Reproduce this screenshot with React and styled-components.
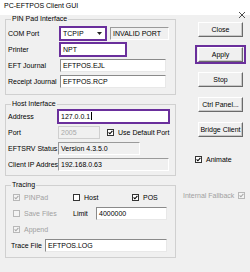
import React from 'react';
import styled, { createGlobalStyle } from 'styled-components';

const GlobalStyle = createGlobalStyle`
  html, body {
    margin: 0;
    padding: 0;
    background: #f0f0f0;
  }
  body {
    font-family: "Liberation Sans", Arial, sans-serif;
    font-size: 7px;
    color: #000;
  }
`;

const PURPLE = '#6a2f9c';

const Window = styled.div`
  width: 250px;
  height: 272px;
  background: #f0f0f0;
  overflow: hidden;
  display: flex;
  flex-direction: column;
`;

const TitleBar = styled.div`
  height: 15px;
  flex: none;
  background: #fff;
  display: flex;
  justify-content: space-between;
  align-items: flex-start;
  padding: 0 5px 0 4px;
  box-sizing: border-box;
`;

const Title = styled.span`
  font-size: 7px;
  line-height: 12px;
`;

const CloseX = styled.svg`
  margin-top: 12px;
  width: 6px;
  height: 6px;
`;

const Body = styled.div`
  display: flex;
  flex: 1;
`;

const LeftCol = styled.div`
  width: 176px;
  flex: none;
  padding-left: 5px;
  box-sizing: border-box;
  display: flex;
  flex-direction: column;
  gap: 5px;
`;

const RightCol = styled.div`
  flex: 1;
  display: flex;
  flex-direction: column;
  padding-top: 7px;
`;

const Group = styled.fieldset`
  margin: 0;
  width: 171px;
  min-width: 0;
  box-sizing: border-box;
  border: 1px solid #d0d0d0;
  padding: ${p => p.$pad};
`;

const Legend = styled.legend`
  font-size: 7px;
  line-height: 8px;
  padding: 0 1px;
  margin-left: 3px;
`;

const Row = styled.div`
  display: flex;
  align-items: center;
  height: 16px;
`;

const Label = styled.span`
  width: ${p => (p.$w ? `${p.$w}px` : 'auto')};
  margin-left: ${p => p.$ml || 0}px;
  flex: none;
  white-space: nowrap;
  color: ${p => (p.$disabled ? '#a0a0a0' : '#000')};
`;

const fieldLook = {
  edit: 'background: #fff; border-color: #8a8a8a #e8e8e8 #e8e8e8 #8a8a8a; color: #000;',
  readonly: 'background: #f0f0f0; border-color: #9a9a9a #fff #fff #9a9a9a; color: #000;',
  disabled: 'background: #f0f0f0; border-color: #cfcfcf; color: #a8a8a8;',
};

const Field = styled.div`
  box-sizing: border-box;
  width: ${p => p.$w}px;
  height: ${p => (p.$hl ? 15 : 13)}px;
  margin-left: ${p => (p.$hl ? -1 : 0) + (p.$ml || 0)}px;
  border-style: solid;
  border-width: 1px;
  ${p => fieldLook[p.$look || 'edit']}
  ${p => p.$hl && `border: 2px solid ${PURPLE};`}
  padding-left: 2px;
  line-height: ${p => (p.$hl ? 11 : 11)}px;
  white-space: nowrap;
  overflow: hidden;
  display: flex;
  align-items: center;
`;

const Caret = styled.span`
  display: inline-block;
  width: 1px;
  height: 8px;
  background: #000;
  margin-left: 1px;
`;

const ComboText = styled.span`
  flex: 1;
`;

const ComboArrow = styled.svg`
  width: 5px;
  height: 3px;
  margin-right: 3px;
`;

const Button = styled.div`
  box-sizing: border-box;
  width: 45px;
  height: 15px;
  display: flex;
  align-items: center;
  justify-content: center;
  background: #f0f0f0;
  border: 1px solid;
  border-color: #fff #6a6a6a #6a6a6a #fff;
  box-shadow: inset -1px -1px 0 #c8c8c8;
  white-space: nowrap;
`;

const ButtonSlot = styled.div`
  margin-left: 22px;
  margin-bottom: 10px;
`;

const Focus = styled.div`
  margin: -2px -3px;
  padding: 0 1px;
  border: 2px solid ${PURPLE};
  width: fit-content;
`;

const CheckWrap = styled.span`
  display: flex;
  align-items: center;
  gap: 4px;
  width: ${p => (p.$w ? `${p.$w}px` : 'auto')};
  margin-left: ${p => p.$ml || 0}px;
  flex: none;
  white-space: nowrap;
  color: ${p => (p.$disabled ? '#a0a0a0' : '#000')};
`;

const Box = styled.span`
  box-sizing: border-box;
  width: 7px;
  height: 7px;
  flex: none;
  display: inline-flex;
  align-items: center;
  justify-content: center;
  border: 1px solid ${p => (p.$disabled ? '#b8b8b8' : '#333')};
  background: ${p => (p.$disabled ? '#f4f4f4' : '#fff')};
`;

const SideRow = styled.div`
  display: flex;
  align-items: center;
  height: 9px;
  margin-top: ${p => p.$mt}px;
  margin-left: ${p => p.$ml}px;
`;

const Check = ({ checked, disabled, label, w, ml, right }) => {
  const box = (
    <Box $disabled={disabled}>
      {checked && (
        <svg width="5" height="5" viewBox="0 0 5 5">
          <path
            d="M0.6 2.4 L1.9 3.8 L4.4 0.9"
            fill="none"
            stroke={disabled ? '#a8a8a8' : '#000'}
            strokeWidth="1.1"
          />
        </svg>
      )}
    </Box>
  );
  return (
    <CheckWrap $w={w} $ml={ml} $disabled={disabled}>
      {right ? label : box}
      {right ? box : label}
    </CheckWrap>
  );
};

export default function App() {
  return (
    <Window>
      <GlobalStyle />
      <TitleBar>
        <Title>PC-EFTPOS Client GUI</Title>
        <CloseX viewBox="0 0 6 6">
          <path d="M0 0 L6 6 M6 0 L0 6" stroke="#222" strokeWidth="0.8" />
        </CloseX>
      </TitleBar>
      <Body>
        <LeftCol>
          <Group $pad="2px 2px 5px 2px">
            <Legend>PIN Pad Interface</Legend>
            <Row>
              <Label $w={52}>COM Port</Label>
              <Field $w={48} $hl>
                <ComboText>TCPIP</ComboText>
                <ComboArrow viewBox="0 0 5 3">
                  <path d="M0 0 H5 L2.5 3 Z" fill="#222" />
                </ComboArrow>
              </Field>
              <Field $w={59} $ml={3} $look="readonly">INVALID PORT</Field>
            </Row>
            <Row>
              <Label $w={52}>Printer</Label>
              <Field $w={68} $hl>NPT</Field>
            </Row>
            <Row>
              <Label $w={52}>EFT Journal</Label>
              <Field $w={106}>EFTPOS.EJL</Field>
            </Row>
            <Row>
              <Label $w={52}>Receipt Journal</Label>
              <Field $w={106}>EFTPOS.RCP</Field>
            </Row>
          </Group>

          <Group $pad="0 2px 3px 2px">
            <Legend>Host Interface</Legend>
            <Row>
              <Label $w={50}>Address</Label>
              <Field $w={113} $hl>
                127.0.0.1<Caret />
              </Field>
            </Row>
            <Row>
              <Label $w={50}>Port</Label>
              <Field $w={42} $look="disabled">2005</Field>
              <Check checked label="Use Default Port" ml={7} />
            </Row>
            <Row>
              <Label $w={50}>EFTSRV Status</Label>
              <Field $w={82} $look="readonly">Version 4.3.5.0</Field>
            </Row>
            <Row>
              <Label $w={50}>Client IP Address</Label>
              <Field $w={111} $look="readonly">192.168.0.63</Field>
            </Row>
          </Group>

          <Group $pad="0 2px 4px 2px">
            <Legend>Tracing</Legend>
            <Row>
              <Check checked disabled label="PINPad" w={60} ml={5} />
              <Check label="Host" w={59} />
              <Check checked label="POS" />
            </Row>
            <Row>
              <Check disabled label="Save Files" w={60} ml={5} />
              <Label $w={23}>Limit</Label>
              <Field $w={71}>4000000</Field>
            </Row>
            <Row>
              <Check checked disabled label="Append" ml={5} />
            </Row>
            <Row>
              <Label $w={34} $ml={3}>Trace File</Label>
              <Field $w={122}>EFTPOS.LOG</Field>
            </Row>
          </Group>
        </LeftCol>

        <RightCol>
          <ButtonSlot>
            <Button>Close</Button>
          </ButtonSlot>
          <ButtonSlot>
            <Focus>
              <Button>Apply</Button>
            </Focus>
          </ButtonSlot>
          <ButtonSlot>
            <Button>Stop</Button>
          </ButtonSlot>
          <ButtonSlot>
            <Button>Ctrl Panel...</Button>
          </ButtonSlot>
          <ButtonSlot>
            <Button>Bridge Client</Button>
          </ButtonSlot>
          <SideRow $mt={8} $ml={19}>
            <Check checked label="Animate" />
          </SideRow>
          <SideRow $mt={27} $ml={7}>
            <Check checked disabled right label="Internal Fallback" />
          </SideRow>
        </RightCol>
      </Body>
    </Window>
  );
}
